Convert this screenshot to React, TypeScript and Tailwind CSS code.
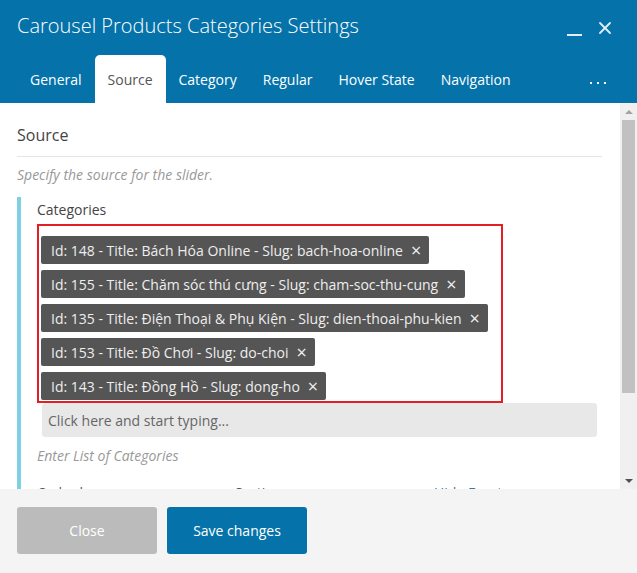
import { X } from "lucide-react";

const tabs = ["General", "Source", "Category", "Regular", "Hover State", "Navigation"];

const categories = [
  "Id: 148 - Title: Bách Hóa Online - Slug: bach-hoa-online",
  "Id: 155 - Title: Chăm sóc thú cưng - Slug: cham-soc-thu-cung",
  "Id: 135 - Title: Điện Thoại & Phụ Kiện - Slug: dien-thoai-phu-kien",
  "Id: 153 - Title: Đồ Chơi - Slug: do-choi",
  "Id: 143 - Title: Đồng Hồ - Slug: dong-ho",
];

function Scrollbar() {
  return (
    <div className="flex w-[17px] shrink-0 flex-col items-center bg-[#f0f0f0]">
      <div className="flex h-[17px] items-center justify-center">
        <span className="h-0 w-0 border-x-[4px] border-b-[4px] border-x-transparent border-b-[#a3a3a3]" />
      </div>
      <div className="h-[273px] w-[13px] bg-[#c1c1c1]" />
      <div className="flex-1" />
      <div className="flex h-[17px] items-center justify-center">
        <span className="h-0 w-0 border-x-[4px] border-t-[4px] border-x-transparent border-t-[#505050]" />
      </div>
    </div>
  );
}

export default function App() {
  return (
    <div className="flex h-[573px] w-[637px] flex-col overflow-hidden bg-white font-['Open_Sans',sans-serif]">
      <header className="bg-[#0573aa] text-white">
        <div className="flex h-[55px] items-center justify-between pl-[17px] pr-[22px]">
          <h1 className="pb-[3px] text-[20px] font-light leading-none">
            Carousel Products Categories Settings
          </h1>
          <div className="flex items-center gap-[13px]">
            <span className="mt-[14px] block h-[2px] w-[15px] bg-[#dfeef6]" />
            <X size={20} strokeWidth={2.2} className="text-[#dfeef6]" />
          </div>
        </div>
        <nav className="flex h-[48px] items-stretch pl-[17px] pr-[31px]">
          {tabs.map((tab) => (
            <div
              key={tab}
              className={
                tab === "Source"
                  ? "flex items-center rounded-t-[5px] bg-white px-[13px] pt-[1px] text-[14px] text-[#555]"
                  : "flex items-center px-[13px] pt-[1px] text-[14px] text-white"
              }
            >
              {tab}
            </div>
          ))}
          <div className="ml-auto flex items-center gap-[5px] pt-[8px]">
            <span className="h-[2px] w-[2px] bg-white" />
            <span className="h-[2px] w-[2px] bg-white" />
            <span className="h-[2px] w-[2px] bg-white" />
          </div>
        </nav>
      </header>

      <div className="flex h-[386px] shrink-0">
        <div className="flex-1 overflow-hidden pl-[17px] pr-[18px]">
          <h2 className="mt-[21px] text-[16px] leading-[22px] text-[#444]">Source</h2>
          <div className="mt-[10px] h-px bg-[#e5e5e5]" />
          <p className="mt-[9px] text-[14px] italic leading-[18px] text-[#999]">
            Specify the source for the slider.
          </p>
          <div className="mt-[13px] border-l-[4px] border-[#7fd0e2] pl-[16px] pt-[4px]">
            <p className="text-[14px] leading-[18px] text-[#444]">Categories</p>
            <div className="mt-[5px] w-[466px] border-2 border-[#e31e24] pb-[1px] pl-[2px] pt-[10px]">
              <div className="flex flex-col items-start gap-[6px]">
                {categories.map((c) => (
                  <div
                    key={c}
                    className="flex h-[28px] items-center gap-[8px] rounded-[2px] bg-[#555] pl-[10px] pr-[8px] text-[14px] text-[#eee]"
                  >
                    <span>{c}</span>
                    <span className="text-[18px] leading-none">×</span>
                  </div>
                ))}
              </div>
            </div>
            <div className="ml-[5px] flex h-[34px] w-[555px] items-center rounded-[3px] bg-[#e8e8e8] px-[6px] text-[14px] text-[#666]">
              Click here and start typing...
            </div>
            <p className="mt-[10px] text-[14px] italic leading-[18px] text-[#999]">
              Enter List of Categories
            </p>
            <div className="mt-[19px] grid grid-cols-[198px_199px_1fr] text-[14px] leading-[18px] text-[#555]">
              <span>Order by</span>
              <span>Sorting</span>
              <span className="text-[#3a76a8]">Hide Empty</span>
            </div>
          </div>
        </div>
        <Scrollbar />
      </div>

      <footer className="flex flex-1 items-start gap-[10px] bg-[#f4f4f4] pl-[17px] pt-[18px]">
        <button className="h-[47px] w-[140px] rounded-[3px] bg-[#bbbbbb] text-[14px] text-white">
          Close
        </button>
        <button className="h-[47px] w-[140px] rounded-[3px] bg-[#0573aa] text-[14px] text-white">
          Save changes
        </button>
      </footer>
    </div>
  );
}
